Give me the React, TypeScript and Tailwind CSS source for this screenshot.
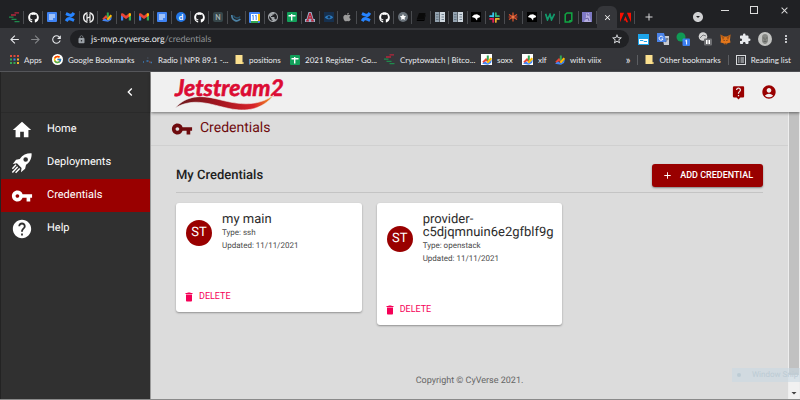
import React from "react";
import { FaGithub, FaApple, FaStar } from "react-icons/fa";
import { SiConfluence, SiAdobe } from "react-icons/si";
import { FcGoogle } from "react-icons/fc";
import {
  MdHome,
  MdVpnKey,
  MdHelp,
  MdChevronLeft,
  MdLiveHelp,
  MdAccountCircle,
  MdDelete,
  MdAdd,
  MdArrowBack,
  MdArrowForward,
  MdRefresh,
  MdLock,
  MdStarBorder,
  MdMoreVert,
  MdExtension,
  MdPublic,
  MdArrowDropDown,
  MdArrowDropDownCircle,
  MdClose,
} from "react-icons/md";

const Crypto = () => (
  <svg viewBox="0 0 11 11" className="size-[11px]" aria-hidden="true">
    <path d="M5.500.8H10M2 3h5" stroke="#b5273c" strokeWidth="1.300" />
    <path d="M0 5.200h4.500M2.500 7.400H7.500M5.500 9.600h5" stroke="#1f8a4c" strokeWidth="1.300" />
  </svg>
);

const Docs = () => (
  <svg viewBox="0 0 10 10" className="size-[10px]" aria-hidden="true">
    <rect width="10" height="10" rx="1" fill="#3f83f3" />
    <path d="M2 3h6M2 5h6M2 7h4" stroke="#fff" strokeWidth="1" />
  </svg>
);

const Sheets = () => (
  <svg viewBox="0 0 10 10" className="size-[10px]" aria-hidden="true">
    <rect width="10" height="10" rx="1" fill="#12a05a" />
    <path d="M1.500 3.800h7M4.700 2v6.500" stroke="#fff" strokeWidth="1.400" />
  </svg>
);

const Gmail = () => (
  <svg viewBox="0 0 10 8" className="h-[8px] w-[10px]" aria-hidden="true">
    <path d="M0 1.200v6.300h2.200V2.500z" fill="#4285f4" />
    <path d="M10 1.200v6.300H7.800V2.500z" fill="#34a853" />
    <path d="M0 1.500C0 0 1.300-.2 2.200.6L5 2.800 7.800.6C8.700-.2 10 0 10 1.500v1L5 6 0 2.500z" fill="#ea4335" />
    <path d="M7.800.6C8.700-.2 10 0 10 1.500v1L7.800 4z" fill="#fbbc04" />
  </svg>
);

const Finance = () => (
  <svg viewBox="0 0 10 10" className="size-[10px]" aria-hidden="true">
    <path d="M1 7.500 4 4.500l2 2" stroke="#ea4335" strokeWidth="2" fill="none" />
    <path d="M4.800.5h2v5h-2z" fill="#34a853" />
    <path d="m5.500 8 3.800-4.800" stroke="#fbbc04" strokeWidth="2.200" />
    <path d="M0 8.800 3 6.500l3 2 4-4-1 3.500-3 1.800z" fill="#4285f4" />
  </svg>
);

const CircleH = () => (
  <svg viewBox="0 0 11 11" className="size-[11px]" fill="none" stroke="#f1f1f1" aria-hidden="true">
    <path d="M4.500.8C-.6 2-.6 9 4.500 10.200M6.500.8c5.100 1.200 5.100 8.200 0 9.400" strokeWidth="1.400" />
    <path d="M4 2v7M7 2v7M4 6.200l3-1.500" strokeWidth="1.200" />
  </svg>
);

const Swirl = () => (
  <svg viewBox="0 0 10 10" className="size-[10px]" fill="none" aria-hidden="true">
    <path d="M.8 3c0 5.500 5.500 7.500 8.500 4" stroke="#4d82a4" strokeWidth="1.700" />
    <path d="M2.500 3.500C4 7 8 6.500 9 4.500" stroke="#27536e" strokeWidth="1.500" />
  </svg>
);

const Calendar = () => (
  <svg viewBox="0 0 11 11" className="size-[11px]" aria-hidden="true">
    <rect width="11" height="11" rx="1" fill="#4285f4" />
    <path d="M9 2h2v7H9z" fill="#fbbc04" />
    <path d="M2 9h7v2H2z" fill="#34a853" />
    <path d="M2 2h7v7H2z" fill="#fff" />
    <path d="M3 4l1.200-.8V8M6 4l1.200-.8V8" stroke="#4285f4" fill="none" />
  </svg>
);

const Arizona = () => (
  <svg viewBox="0 0 10 10" className="size-[10px]" aria-hidden="true">
    <path d="M3.500 0h3l2 7H10v3H0V7h1.500z" fill="#9cb0cb" />
    <path d="M5 1 2.500 8.500M5 1l2.500 7.500M3.500 6h3M1 8.800h3M6 8.800h3" stroke="#b8263a" strokeWidth="1.300" />
  </svg>
);

const Eye = () => (
  <svg viewBox="0 0 10 10" className="size-[10px]" aria-hidden="true">
    <rect width="10" height="10" fill="#16304e" />
    <path d="M.8 5.200C3 2.500 7 2.500 9.200 5.200 7 8 3 8 .8 5.200z" fill="#2d7abd" />
    <circle cx="5" cy="5.200" r="1.300" fill="#16304e" />
  </svg>
);

const StarDisc = () => (
  <span className="flex size-[10px] items-center justify-center rounded-full bg-[#69727a] text-white">
    <FaStar className="size-[6px]" />
  </span>
);

const Slab = () => (
  <svg viewBox="0 0 10 10" className="size-[10px]" aria-hidden="true">
    <path d="M3 1h6.500L8 7H.8z" fill="#0a0a0a" />
    <path d="M.8 7.500H8L9.500 2v1.500L8.300 9H.8z" fill="#000" />
  </svg>
);

const Building = () => (
  <svg viewBox="0 0 10 10" className="size-[10px]" aria-hidden="true">
    <path d="M0 0h4.500v10H0z" fill="#93a2af" />
    <path d="M5 0h5v10H5z" fill="#cfd8df" />
    <path d="M1 2.500h2.500M1 5h2.500M1 7.500h2.500M6.500 2.500H9M6.500 5H9M6.500 7.500H9" stroke="#5b6c7b" strokeWidth=".8" />
  </svg>
);

const Bird = () => (
  <svg viewBox="0 0 10 10" className="size-[10px]" aria-hidden="true">
    <rect width="10" height="10" fill="#000" />
    <path d="M.8 5 3 2.800l3-.6L9.200 4 8.500 5.500 6.500 6 6 8.500 4 6z" fill="#fff" />
  </svg>
);

const Slack = () => (
  <svg viewBox="0 0 10 10" className="size-[11px]" strokeWidth="1.600" strokeLinecap="round" aria-hidden="true">
    <path d="M3.800 1v3M1 3.800h2.500" stroke="#36c5f0" />
    <path d="M6.200 1v2.800M6.500 3.800H9" stroke="#2eb67d" />
    <path d="M6.200 6.300V9M6.500 6.300H9" stroke="#ecb22e" />
    <path d="M3.800 6.300V9M1 6.300h2.500" stroke="#e01e5a" />
  </svg>
);

const Burst = () => (
  <svg viewBox="0 0 10 10" className="size-[10px]" strokeWidth="1.200" aria-hidden="true">
    <path d="M5 .5v9M1 2.500l8 5M1 7.500l8-5" stroke="#e4572e" />
    <path d="M.5 5h9" stroke="#c0392b" />
    <circle cx="5" cy="5" r="1.500" fill="#e87a45" />
  </svg>
);

const Wave = () => (
  <svg viewBox="0 0 10 8" className="h-[8px] w-[10px]" fill="none" aria-hidden="true">
    <path d="m.6.800 1.900 6L5 1.500l1.500 5.300L9.500.8" stroke="#129a6c" strokeWidth="1.700" />
  </svg>
);

const GreenFrame = () => (
  <svg viewBox="0 0 9 11" className="h-[11px] w-[9px]" fill="none" aria-hidden="true">
    <path d="M3 1h4.800v7.800L6 10H1.200V2.500z" stroke="#11a843" strokeWidth="1.500" />
    <path d="M5.500 10V8.500h2" stroke="#11a843" />
  </svg>
);

const Portrait = () => (
  <svg viewBox="0 0 10 10" className="size-[10px]" aria-hidden="true">
    <rect width="10" height="10" fill="#7e79c4" />
    <path d="M4 1h3l.5 3L9 10H2l2-5z" fill="#b6aee0" />
    <path d="M4.500 2h1.500v2M3 7l3-1 1 3" stroke="#5a5598" strokeWidth=".8" fill="none" />
  </svg>
);

const Rocket = () => (
  <svg viewBox="0 0 24 24" className="size-[22px]" fill="currentColor" aria-hidden="true">
    <path
      fillRule="evenodd"
      d="M22.500 1.500c-5.500-.2-9.500 1.500-13 6L5.500 8.500 2 13l4.500-.6 5 5-.6 4.600 4.500-3.700 1-4.300c4.600-3.500 6.300-7.500 6.100-12.500zm-6.500 9.200a2.500 2.500 0 1 1 0-5 2.500 2.500 0 0 1 0 5z"
    />
    <path d="M5.500 14 1.500 18.300M7.300 16 1.500 22.300M9.500 18l-4.500 4.700" stroke="currentColor" strokeWidth="1.600" />
  </svg>
);

const tabs: { name: string; icon: React.ReactNode }[] = [
  { name: "Cryptowatch", icon: <Crypto /> },
  { name: "GitHub", icon: <FaGithub className="size-[11px] text-white" /> },
  { name: "Document", icon: <Docs /> },
  { name: "Confluence", icon: <SiConfluence className="size-[10px] text-[#2684ff]" /> },
  { name: "Hub", icon: <CircleH /> },
  { name: "Finance", icon: <Finance /> },
  { name: "Mail", icon: <Gmail /> },
  { name: "Mail 2", icon: <Gmail /> },
  { name: "Document 2", icon: <Docs /> },
  {
    name: "Discourse",
    icon: (
      <span className="flex size-[10px] items-center justify-center rounded-full bg-[#2376e5] text-[8px] font-bold leading-none text-white">
        d
      </span>
    ),
  },
  { name: "GitHub 2", icon: <FaGithub className="size-[11px] text-white" /> },
  {
    name: "Notes",
    icon: (
      <span className="flex size-[10px] items-center justify-center rounded-xs bg-[#37474b] text-[7px] font-bold leading-none text-[#aab4b4]">
        N
      </span>
    ),
  },
  { name: "CyVerse", icon: <Swirl /> },
  { name: "Calendar", icon: <Calendar /> },
  { name: "Web", icon: <MdPublic className="size-[12px] text-[#a2a6aa]" /> },
  { name: "Sheet", icon: <Sheets /> },
  { name: "Arizona", icon: <Arizona /> },
  { name: "Eye", icon: <Eye /> },
  { name: "Apple", icon: <FaApple className="size-[10px] text-[#9b9b9b]" /> },
  { name: "Confluence 2", icon: <SiConfluence className="size-[10px] text-[#2684ff]" /> },
  { name: "GitHub 3", icon: <FaGithub className="size-[11px] text-white" /> },
  { name: "Star", icon: <StarDisc /> },
  { name: "Slab", icon: <Slab /> },
  { name: "Directory", icon: <Building /> },
  { name: "Directory 2", icon: <Building /> },
  { name: "Bird", icon: <Bird /> },
  { name: "Slack", icon: <Slack /> },
  { name: "Burst", icon: <Burst /> },
  { name: "Bird 2", icon: <Bird /> },
  { name: "Wave", icon: <Wave /> },
  { name: "Frame", icon: <GreenFrame /> },
  { name: "Portrait", icon: <Portrait /> },
];

const AppsGrid = () => (
  <svg viewBox="0 0 9 9" className="size-[9px]" aria-hidden="true">
    <path d="M0 0h2v2H0zM3.500 0h2v2h-2zM7 0h2v2H7z" fill="#e24a3b" />
    <path d="M0 3.500h2v2H0z" fill="#34a853" />
    <path d="M3.500 3.500h2v2h-2z" fill="#4285f4" />
    <path d="M7 3.500h2v2H7zM7 7h2v2H7z" fill="#f1b32a" />
    <path d="M0 7h2v2H0zM3.500 7h2v2h-2z" fill="#34a853" />
  </svg>
);

const Folder = () => (
  <svg viewBox="0 0 9 9" className="size-[9px]" aria-hidden="true">
    <path d="M.5 0h7v7H8.500v2H.5z" fill="#fbe08f" />
    <path d="M7.500 7v2" stroke="#d9b65b" strokeWidth=".6" />
  </svg>
);

const Radio = () => (
  <svg viewBox="0 0 11 9" className="h-[9px] w-[11px]" aria-hidden="true">
    <path d="M1 7h1M4.500 6h2M8.500 7.500H10" stroke="#3979b7" strokeWidth="1.400" />
    <path d="M5 3h1.500" stroke="#4b5565" />
    <path d="M7 7h1.500" stroke="#b5502f" />
  </svg>
);

const FinanceTile = () => (
  <span className="flex size-[11px] items-center justify-center bg-white">
    <Finance />
  </span>
);

const bookmarks = [
  { label: "Apps", icon: <AppsGrid />, width: "w-[42px]" },
  { label: "Google Bookmarks", icon: <FcGoogle className="size-[11px] rounded-full bg-white p-px" />, width: "w-[90px]" },
  { label: "Radio | NPR 89.1 -...", icon: <Radio />, width: "w-[93px]" },
  { label: "positions", icon: <Folder />, width: "w-[55px]" },
  { label: "2021 Register - Go...", icon: <Sheets />, width: "w-[94px]" },
  { label: "Cryptowatch | Bitco...", icon: <Crypto />, width: "w-[97px]" },
  { label: "soxx", icon: <FinanceTile />, width: "w-[41px]" },
  { label: "xlf", icon: <FinanceTile />, width: "w-[33px]" },
  { label: "with viiix", icon: <Finance />, width: "w-[50px]" },
];

function TabStrip() {
  return (
    <div className="flex h-[28px] items-end bg-[#202124] pl-[6px]">
      <div className="flex h-[22px] flex-1">
        {tabs.map((tab) => (
          <button
            key={tab.name}
            type="button"
            aria-label={tab.name}
            className="flex min-w-0 flex-1 items-center justify-center"
          >
            <span className="flex flex-1 justify-center">{tab.icon}</span>
            <span className="h-[13px] w-px bg-[#4a4c50]" />
          </button>
        ))}
      </div>
      <button
        type="button"
        aria-label="Close tab"
        className="flex h-[22px] w-[20px] items-center justify-center rounded-t-md bg-[#35363a] text-white"
      >
        <MdClose className="size-[9px]" />
      </button>
      <button type="button" aria-label="Adobe" className="flex h-[22px] w-[18px] items-center justify-center">
        <span className="flex flex-1 justify-center">
          <SiAdobe className="size-[11px] text-[#fa0f00]" />
        </span>
        <span className="h-[13px] w-px bg-[#4a4c50]" />
      </button>
      <button type="button" aria-label="New tab" className="flex h-[22px] w-[27px] items-center justify-center text-[#d5d6d8]">
        <MdAdd className="size-[12px]" />
      </button>
      <div className="flex h-[28px] w-[138px] items-start">
        <button type="button" aria-label="Search tabs" className="ml-[30px] mt-[11px] text-[#d0d1d3]">
          <MdArrowDropDownCircle className="size-[12px]" />
        </button>
        <div className="flex h-[20px] flex-1 items-center justify-between pl-[17px] pr-[10px] text-[#dcdcdc]">
          <button type="button" aria-label="Minimize" className="h-px w-[8px] bg-[#dcdcdc]" />
          <button type="button" aria-label="Maximize" className="size-[8px] border border-[#dcdcdc]" />
          <button type="button" aria-label="Close window">
            <MdClose className="size-[11px]" />
          </button>
        </div>
      </div>
    </div>
  );
}

function Toolbar() {
  return (
    <div className="flex h-[22px] items-center bg-[#35363a] text-[#e8eaed]">
      <div className="flex w-[70px] items-center gap-[8px] pl-[8px]">
        <button type="button" aria-label="Back"><MdArrowBack className="size-[13px]" /></button>
        <button type="button" aria-label="Forward"><MdArrowForward className="size-[13px] text-[#85878a]" /></button>
        <button type="button" aria-label="Reload"><MdRefresh className="size-[13px]" /></button>
      </div>
      <div className="flex h-[18px] flex-1 items-center rounded-full bg-[#202124] pl-[7px] pr-[6px]">
        <MdLock className="size-[9px] text-[#9aa0a6]" />
        <a href="#credentials" className="ml-[5px] flex-1 text-[9px] leading-[14px] text-[#8f9397]">
          <span className="text-[#e8eaed]">js-mvp.cyverse.org</span>/credentials
        </a>
        <button type="button" aria-label="Bookmark this page"><MdStarBorder className="size-[12px]" /></button>
      </div>
      <div className="flex w-[171px] items-center justify-between pl-[9px] pr-[8px]">
        <svg viewBox="0 0 11 11" className="size-[11px]" aria-hidden="true">
          <rect width="11" height="11" fill="#1da4ea" />
          <path d="M1 5h9v5H1z" fill="#fff" />
          <path d="M2 6.500h3l1 1h3" stroke="#1da4ea" fill="none" />
        </svg>
        <svg viewBox="0 0 12 12" className="size-[12px]" aria-hidden="true">
          <path d="M5 3h7v9H7z" fill="#c9ccd1" />
          <path d="M0 0h7l2.500 9H0z" fill="#4a83e8" />
          <path d="M6 4.500A2 2 0 1 0 6 6H4.500" stroke="#fff" fill="none" />
          <path d="M8.500 6h3M10 5v1c0 2-1 2.500-1.500 3" stroke="#4c5a70" strokeWidth=".8" fill="none" />
        </svg>
        <svg viewBox="0 0 14 14" className="size-[14px]" aria-hidden="true">
          <circle cx="5" cy="5" r="4.500" fill="#109a55" />
          <rect x="6.500" y="6.500" width="7.500" height="7.500" rx="1" fill="#3c7ff0" />
          <path d="m9.300 9 1.300-.8V12.500" stroke="#fff" fill="none" />
        </svg>
        <svg viewBox="0 0 14 14" className="size-[14px]" aria-hidden="true">
          <circle cx="5" cy="4.500" r="4.300" fill="#d5d5d5" />
          <path d="m2 6 3-3 3 1" stroke="#77797c" fill="none" />
          <rect x="6" y="6.500" width="8" height="7" rx="1" fill="#6e6f72" />
          <path d="M8 8h1.500v4H8zM10.500 8H12v4h-1.500z" fill="#fff" />
        </svg>
        <svg viewBox="0 0 11 11" className="size-[11px]" aria-hidden="true">
          <path d="m.5.5 3.500 2h3l3.500-2L10 6l.5 2.500-3 .8-1 1.200h-2l-1-1.200-3-.8L1 6z" fill="#e2761b" />
          <path d="m.5.5 4 3L3 6zM10.500.5l-4 3L8 6z" fill="#a85717" />
          <path d="M3 6h1.500l.2 1zM8 6H6.500l-.2 1zM4.500 9.500h2v1h-2z" fill="#3a2a20" />
        </svg>
        <MdExtension className="size-[12px] text-[#e8eaed]" />
        <svg viewBox="0 0 14 14" className="size-[14px]" aria-hidden="true">
          <circle cx="7" cy="7" r="7" fill="#c2c3c1" />
          <path d="M4 5c0-4 6-4 6 0v4c-1 4-5 4-6 0z" fill="#858783" />
          <path d="M5 6h1.500M8 6h1.500M5.500 9.500h3M7 6.500v2" stroke="#5c5e5c" strokeWidth=".8" />
        </svg>
        <button type="button" aria-label="Menu"><MdMoreVert className="size-[12px]" /></button>
      </div>
    </div>
  );
}

function Bookmarks() {
  return (
    <nav aria-label="Bookmarks" className="flex h-[21px] items-center bg-[#35363a] pb-[2px] pl-[10px] text-[8px] leading-[12px] text-[#e8eaed]">
      {bookmarks.map((b) => (
        <a key={b.label} href="#bookmark" className={`flex shrink-0 items-center gap-[5px] whitespace-nowrap ${b.width}`}>
          {b.icon}
          {b.label}
        </a>
      ))}
      <div className="flex flex-1 items-center justify-end gap-[7px] whitespace-nowrap pr-[9px]">
        <button type="button" aria-label="More bookmarks" className="text-[11px] leading-[12px]">»</button>
        <span className="h-[10px] w-px bg-[#5c5e62]" />
        <a href="#other" className="flex items-center gap-[5px]"><Folder />Other bookmarks</a>
        <span className="h-[10px] w-px bg-[#5c5e62]" />
        <button type="button" className="flex items-center gap-[5px]">
          <svg viewBox="0 0 10 10" className="size-[10px]" fill="none" stroke="#d8dadd" aria-hidden="true">
            <rect x=".5" y=".5" width="9" height="9" />
            <path d="M2 3h1.500M4.500 3H8M2 5h1.500M4.500 5H8M2 7h1.500M4.500 7H8" />
          </svg>
          Reading list
        </button>
      </div>
    </nav>
  );
}

const navItems = [
  { label: "Home", icon: <MdHome className="size-[22px]" /> },
  { label: "Deployments", icon: <Rocket /> },
  { label: "Credentials", icon: <MdVpnKey className="size-[22px]" />, active: true },
  { label: "Help", icon: <MdHelp className="size-[22px]" /> },
];

function Sidebar() {
  return (
    <aside className="flex w-[150px] shrink-0 flex-col border-l border-[#232323] bg-[#303030] text-white">
      <div className="flex h-[41px] items-center justify-end border-b border-[#2a2a2a] pr-[12px]">
        <button type="button" aria-label="Collapse menu">
          <MdChevronLeft className="size-[16px]" />
        </button>
      </div>
      <nav aria-label="Main">
        {navItems.map((item) => (
          <a
            key={item.label}
            href={`#${item.label.toLowerCase()}`}
            className={`flex h-[33px] items-center gap-[14px] pl-[10px] text-[11px] ${item.active ? "bg-[#990000]" : ""}`}
          >
            {item.icon}
            {item.label}
          </a>
        ))}
      </nav>
    </aside>
  );
}

function Logo() {
  return (
    <svg viewBox="0 0 112 38" className="h-[38px] w-[112px]" role="img" aria-label="Jetstream2">
      <defs>
        <linearGradient id="swoosh" x1="0" x2="1">
          <stop offset="0" stopColor="#6b1a1e" />
          <stop offset=".45" stopColor="#a3141f" />
          <stop offset=".8" stopColor="#d8232a" />
          <stop offset="1" stopColor="#f5a023" />
        </linearGradient>
      </defs>
      <text x="1" y="23" fill="#dc0b33" stroke="#dc0b33" strokeWidth=".6" fontSize="23" fontWeight="700" fontStyle="italic" fontFamily="Lato, sans-serif">
        Jetstream2
      </text>
      <path
        d="M1 35C13 22 27 22 43 26c18 4.500 38 9.500 57-4-12 15-28 17-45 13.500C36 31.500 20 24 1 35z"
        fill="url(#swoosh)"
        stroke="#f0f0f0"
        strokeWidth=".6"
      />
    </svg>
  );
}

function CredentialCard({ name, type }: { name: string; type: string }) {
  return (
    <article className="rounded-[3px] bg-white shadow-[0_1px_2px_rgba(0,0,0,0.35)]">
      <div className="flex items-center gap-[10px] pl-[10px] pr-[4px] pt-[10px]">
        <span className="flex size-[26px] shrink-0 items-center justify-center rounded-full bg-[#990000] text-[13px] text-white">
          ST
        </span>
        <div className="min-w-0 text-[8px] leading-[13px] text-[#4a4a4a]">
          <h3 className="break-words text-[13px] leading-[13px] text-[#2b2b2b]">{name}</h3>
          <p>Type: {type}</p>
          <p>Updated: 11/11/2021</p>
        </div>
      </div>
      <div className="px-[7px] pb-[8px] pt-[38px]">
        <button type="button" className="flex h-[14px] items-center gap-[4px] text-[9px] text-[#f50057]">
          <MdDelete className="size-[12px]" />
          DELETE
        </button>
      </div>
    </article>
  );
}

export default function App() {
  return (
    <div className="relative flex h-screen flex-col overflow-hidden border-b border-[#8a8a8a] bg-[#dcdcdc] font-['Roboto',sans-serif] [text-rendering:geometricPrecision]">
      <header className="shrink-0 border-b border-[#55565a] font-['Lato','Open_Sans',sans-serif]">
        <TabStrip />
        <Toolbar />
        <Bookmarks />
      </header>
      <div className="flex min-h-0 flex-1">
        <Sidebar />
        <div className="flex min-w-0 flex-1 flex-col border-l border-[#9a9a9a]">
          <div className="z-10 flex h-[40px] shrink-0 items-center justify-between bg-[#f0f0f0] pl-[23px] pr-[23px] text-[#990000] shadow-[0_1px_3px_rgba(0,0,0,0.5)]">
            <Logo />
            <div className="flex items-center gap-[15px]">
              <button type="button" aria-label="Live help"><MdLiveHelp className="size-[15px]" /></button>
              <button type="button" aria-label="Account"><MdAccountCircle className="size-[16px]" /></button>
            </div>
          </div>
          <div className="flex min-h-0 flex-1">
            <main className="flex min-w-0 flex-1 flex-col">
              <div className="flex h-[34px] items-center gap-[7px] border-b border-[#d0d0d0] pl-[20px] text-[#6e0b0e]">
                <MdVpnKey className="size-[22px]" />
                <h1 className="text-[14px]">Credentials</h1>
              </div>
              <section className="px-[25px] pt-[18px]">
                <div className="flex items-center justify-between border-b border-[#c4c4c4] pb-[5px]">
                  <h2 className="text-[13px] font-medium text-[#202020]">My Credentials</h2>
                  <button
                    type="button"
                    className="flex h-[23px] items-center gap-[7px] rounded-[3px] bg-[#990000] px-[10px] text-[9px] font-medium text-white shadow-[0_1px_2px_rgba(0,0,0,0.4)]"
                  >
                    <MdAdd className="size-[11px]" />
                    ADD CREDENTIAL
                  </button>
                </div>
                <div className="grid grid-cols-3 items-start gap-[15px] pt-[10px]">
                  <CredentialCard name="my main" type="ssh" />
                  <CredentialCard name="provider-c5djqmnuin6e2gfblf9g" type="openstack" />
                </div>
              </section>
              <footer className="mt-auto pb-[11px] text-center text-[9px] leading-[13px] text-[#666666]">
                Copyright © CyVerse 2021.
              </footer>
            </main>
            <div className="flex w-[12px] flex-col border-x border-[#eeeeee] bg-[#f1f1f1]" aria-hidden="true">
              <div className="flex-1 bg-[#c1c1c1]" />
              <div className="flex h-[24px] items-end justify-center text-[#404040]">
                <MdArrowDropDown className="size-[12px] shrink-0" />
              </div>
            </div>
          </div>
        </div>
      </div>
      <div className="absolute bottom-[17px] right-0 flex h-[14px] w-[68px] items-center gap-[11px] overflow-hidden whitespace-nowrap bg-[#c9d8e2]/60 pl-[5px] text-[8px] text-[#bccbd4]">
        <span className="size-[4px] shrink-0 rounded-full bg-[#bccbd4]" />
        Window Snip
      </div>
    </div>
  );
}
